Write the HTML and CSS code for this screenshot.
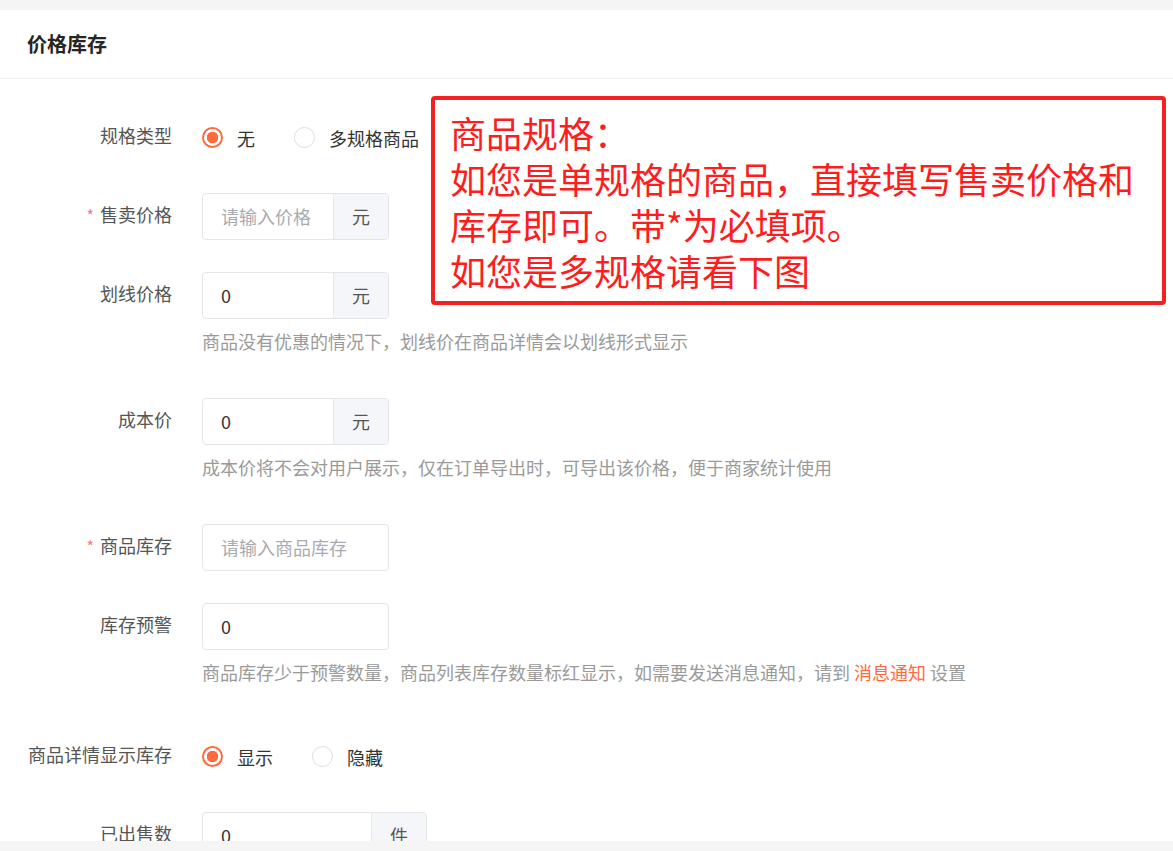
FILE: index.html
```html
<!DOCTYPE html>
<html>
<head>
    <meta charset="UTF-8">
    <title>价格库存</title>
    <link rel="stylesheet" href="styles.css">
</head>
<body>
    <div class="page">
        <div class="card">
            <div class="card-head">价格库存</div>

            <div class="form">
                <div class="form-item">
                    <div class="label">规格类型</div>
                    <div class="control">
                        <div class="radio-group">
                            <span class="radio checked"><span class="dot"></span>无</span>
                            <span class="radio"><span class="dot"></span>多规格商品</span>
                        </div>
                    </div>
                </div>

                <div class="form-item">
                    <div class="label"><span class="req">*</span>售卖价格</div>
                    <div class="control">
                        <div class="input-group">
                            <span class="input placeholder">请输入价格</span>
                            <span class="addon">元</span>
                        </div>
                    </div>
                </div>

                <div class="form-item">
                    <div class="label">划线价格</div>
                    <div class="control">
                        <div class="input-group">
                            <span class="input">0</span>
                            <span class="addon">元</span>
                        </div>
                        <div class="help">商品没有优惠的情况下，划线价在商品详情会以划线形式显示</div>
                    </div>
                </div>

                <div class="form-item">
                    <div class="label">成本价</div>
                    <div class="control">
                        <div class="input-group">
                            <span class="input">0</span>
                            <span class="addon">元</span>
                        </div>
                        <div class="help">成本价将不会对用户展示，仅在订单导出时，可导出该价格，便于商家统计使用</div>
                    </div>
                </div>

                <div class="form-item">
                    <div class="label"><span class="req">*</span>商品库存</div>
                    <div class="control">
                        <div class="input-group">
                            <span class="input placeholder">请输入商品库存</span>
                        </div>
                    </div>
                </div>

                <div class="form-item">
                    <div class="label">库存预警</div>
                    <div class="control">
                        <div class="input-group">
                            <span class="input">0</span>
                        </div>
                        <div class="help help-last">商品库存少于预警数量，商品列表库存数量标红显示，如需要发送消息通知，请到 <a class="link">消息通知</a> 设置</div>
                    </div>
                </div>

                <div class="form-item">
                    <div class="label">商品详情显示库存</div>
                    <div class="control">
                        <div class="radio-group">
                            <span class="radio checked"><span class="dot"></span>显示</span>
                            <span class="radio"><span class="dot"></span>隐藏</span>
                        </div>
                    </div>
                </div>

                <div class="form-item">
                    <div class="label">已出售数</div>
                    <div class="control">
                        <div class="input-group wide">
                            <span class="input">0</span>
                            <span class="addon">件</span>
                        </div>
                    </div>
                </div>
            </div>

            <!-- annotation laid over the form -->
            <div class="note">
                商品规格：<br>
                如您是单规格的商品，直接填写售卖价格和<br>
                库存即可。带*为必填项。<br>
                如您是多规格请看下图
            </div>
        </div>
    </div>
</body>
</html>
```

FILE: styles.css
```css
html, body {
    margin: 0;
    height: 100%;
    overflow: hidden;
}
body {
    font-family: "Noto Sans CJK SC", "Noto Sans", sans-serif;
    background-color: #f5f5f5;
    color: #333;
}
.page {
    padding-top: 10px;
}
.card {
    position: relative;
    background-color: white;
    height: 831px;
    overflow: hidden;
}
.card-head {
    height: 68px;
    line-height: 68px;
    padding-left: 27px;
    font-size: 20px;
    font-weight: bold;
    color: #262626;
    border-bottom: 1px solid #eeeeee;
}
.form {
    padding: 35px 0 0 27px;
}
.form-item {
    display: grid;
    grid-template-columns: 145px 1fr;
    column-gap: 30px;
    margin-bottom: 32px;
}
.label {
    text-align: right;
    font-size: 18px;
    line-height: 42px;
    color: #555;
    white-space: nowrap;
}
.req {
    color: #f47a7a;
    font-size: 16px;
    margin-right: 6px;
}
.control {
    min-height: 47px;
}
.radio-group {
    display: flex;
    align-items: center;
    height: 47px;
    font-size: 18px;
    color: #333;
}
.radio {
    display: flex;
    align-items: center;
    margin-right: 39px;
}
.dot {
    box-sizing: border-box;
    width: 21px;
    height: 21px;
    border: 1px solid #dcdee2;
    border-radius: 50%;
    margin-right: 14px;
    background-color: white;
}
.radio.checked .dot {
    border: 2px solid #ff6a3c;
    background: radial-gradient(circle, #ff6a3c 0 5.5px, white 6px);
}
.input-group {
    box-sizing: border-box;
    display: flex;
    width: 187px;
    height: 47px;
    border: 1px solid #e3e5e8;
    border-radius: 4px;
    overflow: hidden;
    font-size: 18px;
}
.input-group.wide {
    width: 225px;
}
.input {
    flex: 1;
    padding-left: 18px;
    line-height: 45px;
    color: #333;
    white-space: nowrap;
}
.input.placeholder {
    color: #a9abb0;
}
.addon {
    width: 54px;
    text-align: center;
    line-height: 45px;
    background-color: #f5f6f9;
    border-left: 1px solid #e8eaec;
    color: #555;
}
.help {
    margin-top: 12px;
    margin-bottom: 14px;
    font-size: 18px;
    line-height: 21px;
    color: #9a9a9a;
    white-space: nowrap;
}
.help-last {
    margin-bottom: 18px;
}
.link {
    color: #ff6a3c;
    cursor: pointer;
}
.note {
    position: absolute;
    left: 431px;
    top: 86px;
    width: 735px;
    height: 209px;
    box-sizing: border-box;
    border: 4px solid #f52020;
    border-radius: 4px;
    padding: 9px 0 0 15px;
    font-size: 36px;
    line-height: 46px;
    color: #ff1c1c;
    background-color: white;
    white-space: nowrap;
}
```
